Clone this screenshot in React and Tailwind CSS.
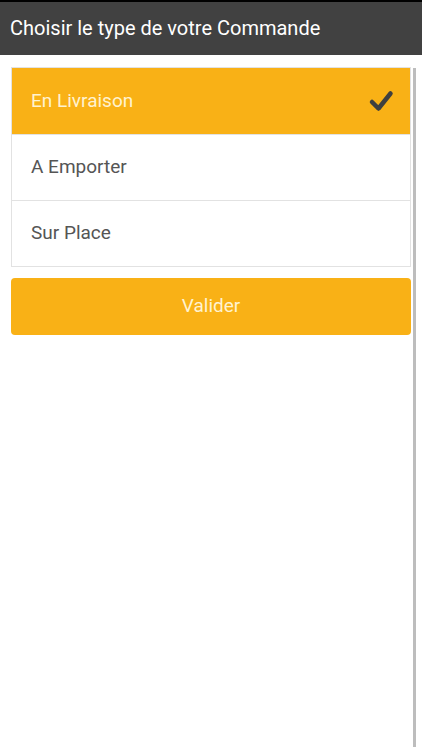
import { useState } from "react";

const options = ["En Livraison", "A Emporter", "Sur Place"];

function Check() {
  return (
    <svg width="26" height="22" viewBox="0 0 26 22" className="text-[#3f3f3f]">
      <path d="M4 12 L10.5 18.5 L22.5 3.5" fill="none" stroke="currentColor" strokeWidth="4.5" strokeLinecap="round" strokeLinejoin="round" />
    </svg>
  );
}

export default function App() {
  const [selected, setSelected] = useState(0);

  return (
    <div className="relative h-[750px] w-[422px] overflow-hidden bg-white" style={{ fontFamily: "Roboto, 'Liberation Sans', sans-serif" }}>
      <div className="h-[2px] bg-black" />
      <div className="flex h-[53px] items-center bg-[#414141] px-[10px] pb-[2px]">
        <h1 className="text-[20px] text-white">Choisir le type de votre Commande</h1>
      </div>

      <div className="px-[11px] pt-[12px]">
        <div className="border border-[#e2e2e2]">
          {options.map((opt, i) => (
            <button
              key={opt}
              type="button"
              onClick={() => setSelected(i)}
              className={
                "flex h-[66px] w-full items-center justify-between pl-[19px] pr-[16px] text-left text-[19px] " +
                (i > 0 ? "border-t border-[#e2e2e2] " : "") +
                (selected === i ? "bg-[#f9b116] text-[#fff3d0]" : "bg-white text-[#555555]")
              }
            >
              <span>{opt}</span>
              {selected === i && <Check />}
            </button>
          ))}
        </div>

        <button
          type="button"
          className="mt-[11px] flex h-[57px] w-full items-center justify-center rounded-[4px] bg-[#f9b116] text-[19px] text-[#fff3d0]"
        >
          Valider
        </button>
      </div>

      <div className="absolute right-[6px] top-[68px] h-[679px] w-[3px] bg-[#bdbdbd]" />
    </div>
  );
}
